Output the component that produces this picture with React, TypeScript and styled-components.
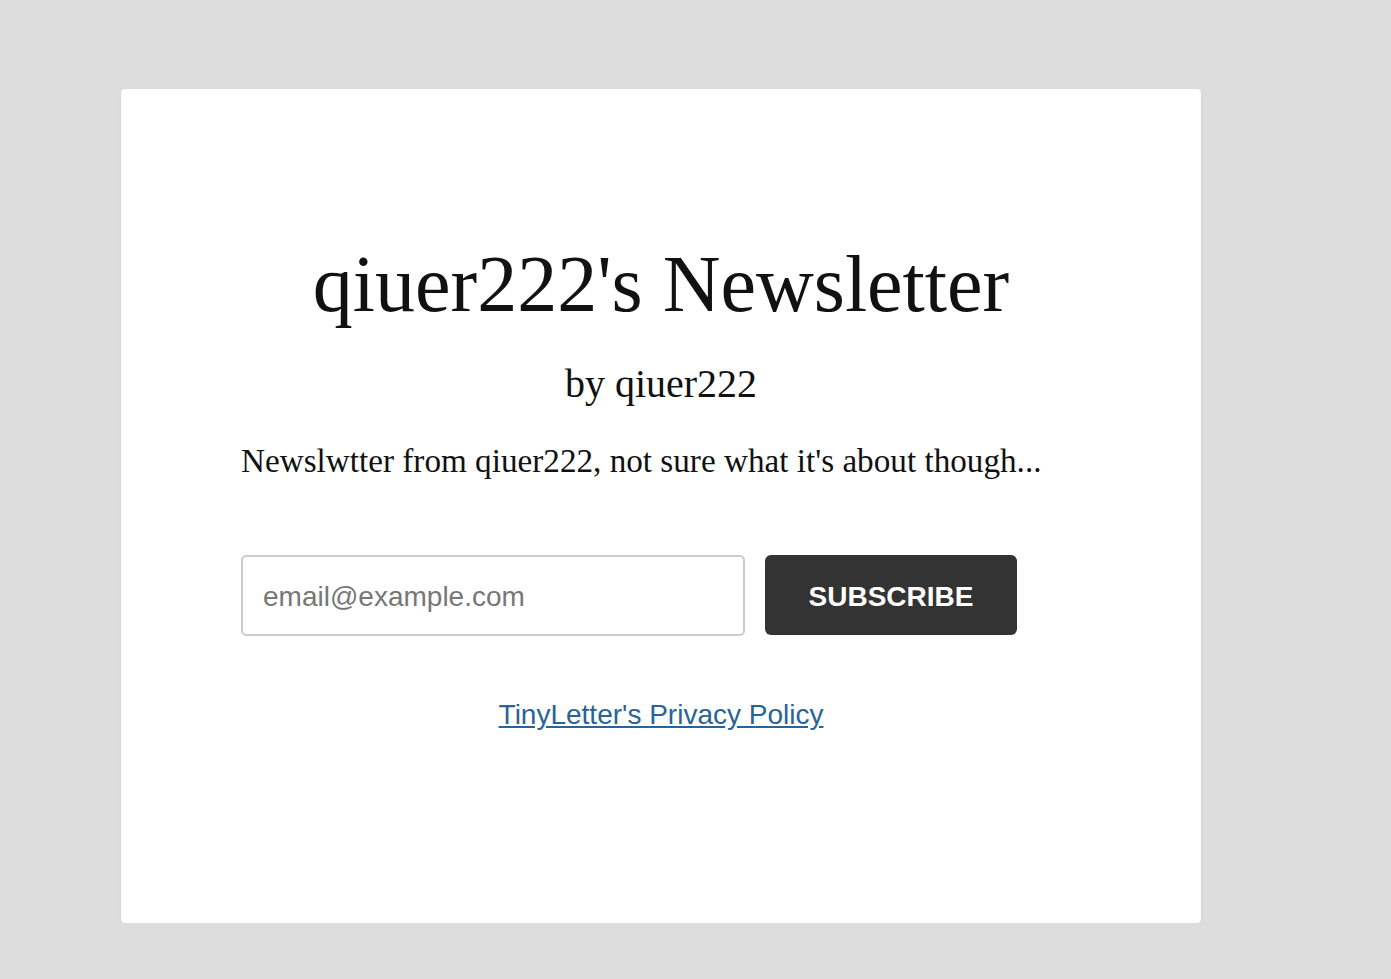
import React from "react";
import styled, { createGlobalStyle } from "styled-components";

const Global = createGlobalStyle`
  html, body { margin: 0; padding: 0; background: #dddddd; }
  body { font-family: Georgia, "Liberation Serif", serif; }
`;

const Card = styled.div`
  box-sizing: border-box;
  margin: 89px 0 0 121px;
  width: 1080px;
  height: 834px;
  background: #ffffff;
  border-radius: 4px;
  box-shadow: 0 1px 3px rgba(0, 0, 0, 0.08);
  padding: 0 120px;
  display: flex;
  flex-direction: column;
  align-items: stretch;
`;

const Title = styled.h1`
  margin: 150px 0 0;
  font-family: Georgia, "Liberation Serif", serif;
  font-weight: 400;
  font-size: 80px;
  line-height: 90px;
  color: #111;
  text-align: center;
`;

const Byline = styled.h2`
  margin: 33px 0 0;
  font-family: Georgia, "Liberation Serif", serif;
  font-weight: 400;
  font-size: 40px;
  line-height: 44px;
  color: #111;
  text-align: center;
`;

const Description = styled.p`
  margin: 35px 0 0;
  font-family: Georgia, "Liberation Serif", serif;
  font-size: 33.2px;
  line-height: 40px;
  color: #111;
`;

const Form = styled.form`
  margin-top: 74px;
  display: flex;
  gap: 20px;
`;

const EmailInput = styled.input`
  box-sizing: border-box;
  width: 504px;
  height: 81px;
  border: 2px solid #cccccc;
  border-radius: 5px;
  padding: 2px 20px 0;
  font-family: "Liberation Sans", Arial, sans-serif;
  font-size: 28px;
  color: #333;
  outline: none;
  &::placeholder { color: #777777; }
`;

const SubmitButton = styled.button`
  box-sizing: border-box;
  width: 252px;
  height: 80px;
  border: none;
  border-radius: 6px;
  padding: 3px 0 0;
  background: #333333;
  color: #ffffff;
  font-family: "Liberation Sans", Arial, sans-serif;
  font-weight: 700;
  font-size: 28px;
  cursor: pointer;
`;

const Footer = styled.div`
  margin-top: 63px;
  text-align: center;
`;

const PolicyLink = styled.a`
  font-family: "Liberation Sans", Arial, sans-serif;
  font-size: 28px;
  color: #2a6496;
  text-decoration: underline;
`;

export default function App() {
  return (
    <>
      <Global />
      <Card>
        <Title>qiuer222's Newsletter</Title>
        <Byline>by qiuer222</Byline>
        <Description>Newslwtter from qiuer222, not sure what it's about though...</Description>
        <Form onSubmit={(e) => e.preventDefault()}>
          <EmailInput type="email" placeholder="email@example.com" />
          <SubmitButton type="submit">SUBSCRIBE</SubmitButton>
        </Form>
        <Footer>
          <PolicyLink href="#">TinyLetter's Privacy Policy</PolicyLink>
        </Footer>
      </Card>
    </>
  );
}
